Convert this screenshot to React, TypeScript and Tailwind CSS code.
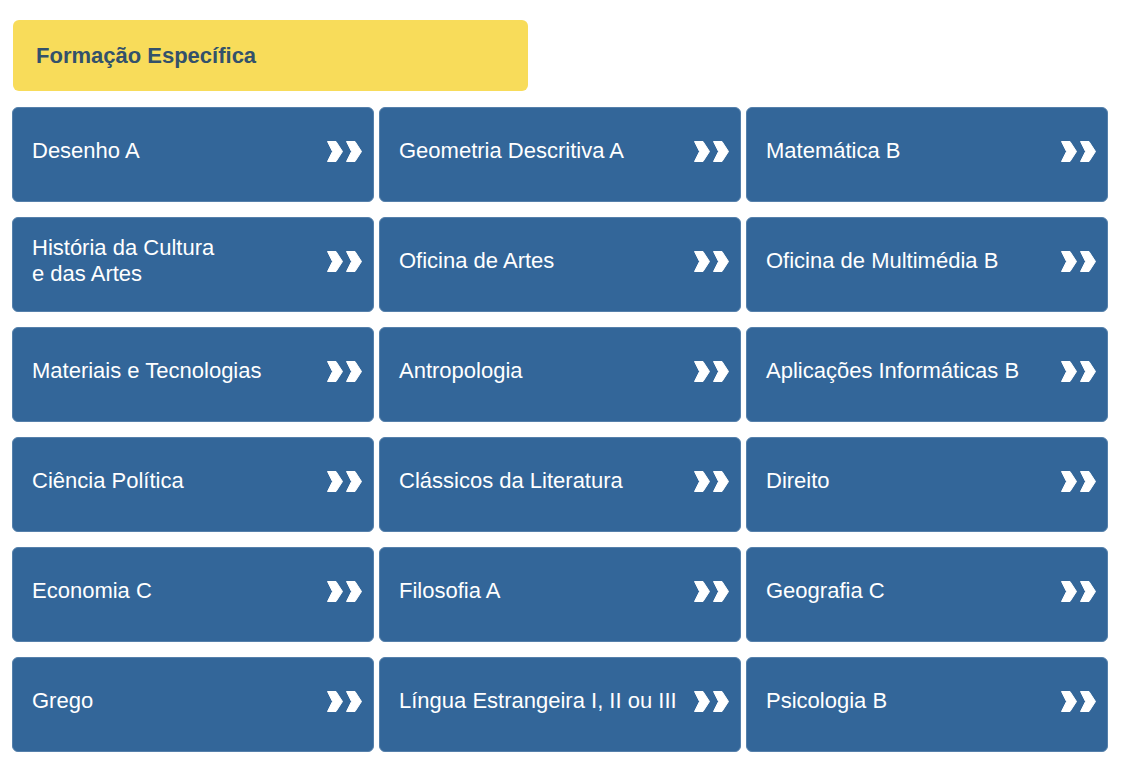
import React from "react";

const items: string[][] = [
  ["Desenho A"],
  ["Geometria Descritiva A"],
  ["Matemática B"],
  ["História da Cultura", "e das Artes"],
  ["Oficina de Artes"],
  ["Oficina de Multimédia B"],
  ["Materiais e Tecnologias"],
  ["Antropologia"],
  ["Aplicações Informáticas B"],
  ["Ciência Política"],
  ["Clássicos da Literatura"],
  ["Direito"],
  ["Economia C"],
  ["Filosofia A"],
  ["Geografia C"],
  ["Grego"],
  ["Língua Estrangeira I, II ou III"],
  ["Psicologia B"],
];

function Chevrons() {
  return (
    <svg width="35" height="21" viewBox="0 0 35 21" className="shrink-0">
      <polygon points="0.5,0.5 9,0.5 15.5,10.5 9,20.5 0.5,20.5 5.5,10.5" fill="#ffffff" stroke="#ffffff" strokeWidth="1" strokeLinejoin="round" />
      <polygon points="19.5,0.5 28,0.5 34.5,10.5 28,20.5 19.5,20.5 24.5,10.5" fill="#ffffff" stroke="#ffffff" strokeWidth="1" strokeLinejoin="round" />
    </svg>
  );
}

export default function App() {
  return (
    <div
      className="w-[1121px] h-[770px] bg-white pt-5 pl-3"
      style={{ fontFamily: '"Liberation Sans", Arial, sans-serif' }}
    >
      <div className="ml-px w-[515px] h-[71px] rounded-md bg-[#f8dc5a] flex items-center pl-[23px]">
        <span className="text-[22px] font-bold text-[#33516b]">
          Formação Específica
        </span>
      </div>
      <div className="mt-4 grid grid-cols-[362px_362px_362px] gap-x-[5px] gap-y-[15px]">
        {items.map((lines, i) => (
          <div
            key={i}
            className="h-[95px] rounded-md bg-[#336699] border border-[#5580ab] flex items-center pl-[19px] pr-[11px] pb-[7px]"
          >
            <div className="flex-1 text-white text-[22px] leading-[26px] whitespace-nowrap">
              {lines.map((l, j) => (
                <div key={j}>{l}</div>
              ))}
            </div>
            <Chevrons />
          </div>
        ))}
      </div>
    </div>
  );
}
